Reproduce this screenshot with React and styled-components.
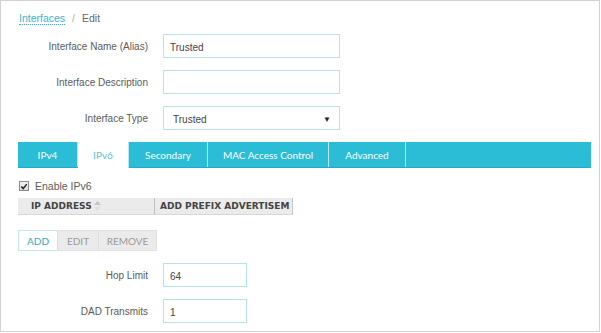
import React from 'react'
import styled, { createGlobalStyle } from 'styled-components'

const Global = createGlobalStyle`
  body {
    margin: 0;
    background: #fff;
    font-family: "Liberation Sans", Arial, sans-serif;
  }
`

const tabs = ['IPv4', 'IPv6', 'Secondary', 'MAC Access Control', 'Advanced']
const tabWidths = [60, 51, 79, 121, 77]

const App = () => {
  return (
    <Frame>
      <Global />
      <Crumbs>
        <CrumbLink>Interfaces</CrumbLink>
        <Slash>/</Slash>
        <span>Edit</span>
      </Crumbs>

      <Row>
        <Label>Interface Name (Alias)</Label>
        <Input defaultValue='Trusted' />
      </Row>
      <Row>
        <Label>Interface Description</Label>
        <Input defaultValue='' />
      </Row>
      <Row>
        <Label>Interface Type</Label>
        <Select>
          <span>Trusted</span>
          <Caret>▼</Caret>
        </Select>
      </Row>

      <TabBar>
        {tabs.map((t, i) => (
          <Tab key={t} $active={t === 'IPv6'} $w={tabWidths[i]}>{t}</Tab>
        ))}
        <TabFill />
      </TabBar>

      <Check>
        <Box>
          <svg viewBox='0 0 9 9' width='9' height='9'>
            <path d='M1.5 4.5 L3.6 6.8 L7.6 1.8' fill='none' stroke='#222' strokeWidth='1.6' />
          </svg>
        </Box>
        <span>Enable IPv6</span>
      </Check>

      <Table>
        <Th $w={137}>
          IP ADDRESS
          <SortIcon viewBox='0 0 7 10' width='7' height='10'>
            <path d='M3.5 0 L7 4 H0 Z' fill='#c4c4c4' />
            <path d='M3.5 10 L7 6 H0 Z' fill='#dedede' />
          </SortIcon>
        </Th>
        <Th $w={138} $last>ADD PREFIX ADVERTISEM</Th>
      </Table>

      <Buttons>
        <Btn $primary $w={40}>ADD</Btn>
        <Btn $w={41}>EDIT</Btn>
        <Btn $w={58}>REMOVE</Btn>
      </Buttons>

      <Row $top={12}>
        <Label>Hop Limit</Label>
        <Input $small defaultValue='64' />
      </Row>
      <Row>
        <Label>DAD Transmits</Label>
        <Input $small defaultValue='1' />
      </Row>
    </Frame>
  )
}

export default App

const Frame = styled.div`
  box-sizing: border-box;
  width: 600px;
  height: 332px;
  border: 1px solid #d2d2d2;
  padding: 10px 0 0 17px;
  overflow: hidden;
`

const Crumbs = styled.div`
  display: flex;
  align-items: center;
  gap: 7px;
  font-size: 10.5px;
  color: #666;
  height: 14px;
  margin-bottom: 9px;
  padding-left: 1px;
`

const CrumbLink = styled.span`
  color: #3ab4cd;
  border-bottom: 1px dotted #3ab4cd;
  line-height: 12px;
`

const Slash = styled.span`
  color: #aaa;
`

const Row = styled.div`
  display: flex;
  align-items: center;
  gap: 15px;
  height: 24px;
  margin-top: ${p => p.$top || 0}px;
  margin-bottom: 12px;
`

const Label = styled.div`
  width: 130px;
  text-align: right;
  font-size: 10px;
  color: #5a5a5a;
`

const Input = styled.input`
  box-sizing: border-box;
  width: ${p => (p.$small ? 84 : 177)}px;
  height: 24px;
  border: 1px solid #b8e2ea;
  padding: 2px 6px 0;
  font-family: "Liberation Sans", Arial, sans-serif;
  font-size: 10px;
  color: #444;
  outline: none;
`

const Select = styled.div`
  box-sizing: border-box;
  width: 177px;
  height: 24px;
  border: 1px solid #b8e2ea;
  padding: 2px 8px 0 9px;
  display: flex;
  align-items: center;
  justify-content: space-between;
  font-size: 10px;
  color: #444;
`

const Caret = styled.span`
  font-size: 8px;
  color: #222;
`

const TabBar = styled.div`
  display: flex;
  width: 573px;
  height: 25px;
  margin-top: 2px;
  background: #2bbcd6;
  border-bottom: 1px solid #26aac2;
  font-family: Lato, "Open Sans", sans-serif;
  font-size: 10px;
`

const Tab = styled.div`
  box-sizing: border-box;
  width: ${p => p.$w}px;
  display: flex;
  align-items: center;
  justify-content: center;
  color: ${p => (p.$active ? '#5bbfd4' : '#fff')};
  background: ${p => (p.$active ? '#fff' : 'transparent')};
  border-right: 1px solid #b5e6f0;
  margin-bottom: ${p => (p.$active ? '-1px' : '0')};
`

const TabFill = styled.div`
  flex: 1;
`

const Check = styled.div`
  display: flex;
  align-items: center;
  gap: 6px;
  margin-top: 12px;
  height: 12px;
  font-size: 10.5px;
  color: #5a5a5a;
  padding-left: 1px;
`

const Box = styled.span`
  box-sizing: border-box;
  width: 10px;
  height: 10px;
  border: 1px solid #8a8a8a;
  background: linear-gradient(#f4f4f4, #dcdcdc);
  display: flex;
  align-items: center;
  justify-content: center;
`

const Table = styled.div`
  display: flex;
  margin-top: 6px;
  height: 17px;
`

const Th = styled.div`
  box-sizing: border-box;
  width: ${p => p.$w}px;
  display: flex;
  align-items: center;
  gap: 2px;
  padding-left: ${p => (p.$last ? 5 : 13)}px;
  background: #ebebeb;
  border-bottom: 1px solid #d8d8d8;
  border-right: 1px solid ${p => (p.$last ? '#c8c8c8' : '#bdbdbd')};
  font-family: "DejaVu Sans", Verdana, sans-serif;
  font-weight: bold;
  font-size: 9px;
  color: #444;
  white-space: nowrap;
  overflow: hidden;
`

const SortIcon = styled.svg`
  flex: none;
`

const Buttons = styled.div`
  display: flex;
  margin-top: 15px;
`

const Btn = styled.div`
  box-sizing: border-box;
  width: ${p => p.$w}px;
  height: 21px;
  display: flex;
  align-items: center;
  justify-content: center;
  font-family: Lato, "Open Sans", sans-serif;
  font-size: 10px;
  color: ${p => (p.$primary ? '#2fa9c4' : '#9a9a9a')};
  background: ${p => (p.$primary ? '#fff' : '#ebebeb')};
  border: 1px solid ${p => (p.$primary ? '#c6e6ee' : '#e0e0e0')};
  border-left-width: ${p => (p.$primary ? 1 : 0)}px;
`
